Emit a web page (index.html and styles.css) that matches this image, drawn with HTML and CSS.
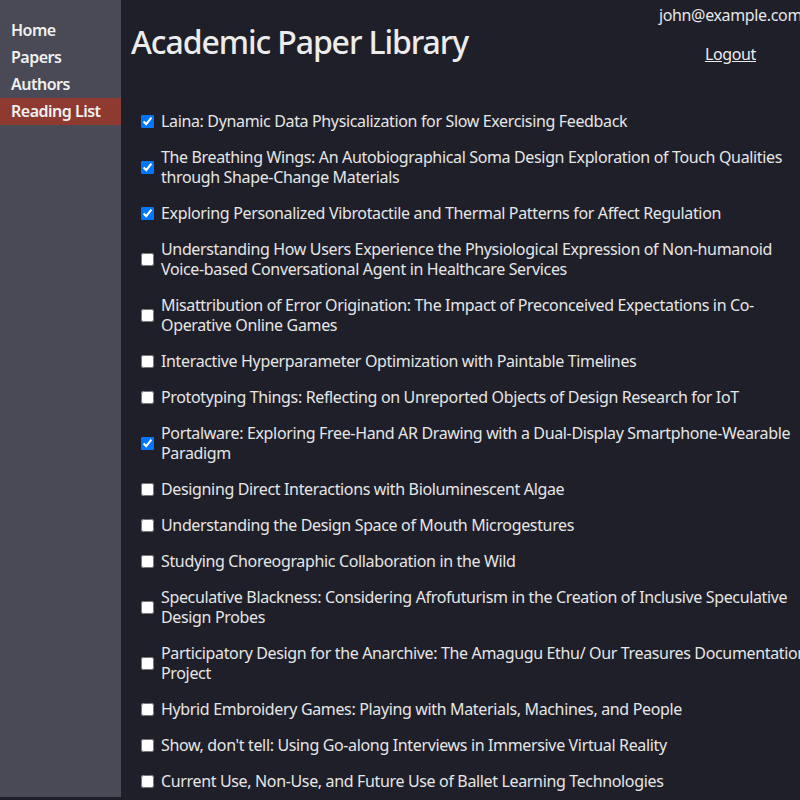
FILE: index.html
```html
<!DOCTYPE html>
<html lang="en">
<head>
<meta charset="utf-8">
<title>Academic Paper Library</title>
<link rel="stylesheet" href="styles.css">
</head>
<body>
<div class="app">
  <nav class="sidebar">
    <a class="nav-link" href="#">Home</a>
    <a class="nav-link" href="#">Papers</a>
    <a class="nav-link" href="#">Authors</a>
    <a class="nav-link active" href="#">Reading List</a>
  </nav>
  <main class="main">
    <header class="header">
      <h1 class="title">Academic Paper Library</h1>
      <div class="user">
        <span class="email">john@example.com</span>
        <a class="logout" href="#">Logout</a>
      </div>
    </header>
    <ul class="list">
      <li class="item"><input type="checkbox" checked><span>Laina: Dynamic Data Physicalization for Slow Exercising Feedback</span></li>
      <li class="item"><input type="checkbox" checked><span>The Breathing Wings: An Autobiographical Soma Design Exploration of Touch Qualities through Shape-Change Materials</span></li>
      <li class="item"><input type="checkbox" checked><span>Exploring Personalized Vibrotactile and Thermal Patterns for Affect Regulation</span></li>
      <li class="item"><input type="checkbox"><span>Understanding How Users Experience the Physiological Expression of Non-humanoid Voice-based Conversational Agent in Healthcare Services</span></li>
      <li class="item"><input type="checkbox"><span>Misattribution of Error Origination: The Impact of Preconceived Expectations in Co-Operative Online Games</span></li>
      <li class="item"><input type="checkbox"><span>Interactive Hyperparameter Optimization with Paintable Timelines</span></li>
      <li class="item"><input type="checkbox"><span>Prototyping Things: Reflecting on Unreported Objects of Design Research for IoT</span></li>
      <li class="item"><input type="checkbox" checked><span>Portalware: Exploring Free-Hand AR Drawing with a Dual-Display Smartphone-Wearable Paradigm</span></li>
      <li class="item"><input type="checkbox"><span>Designing Direct Interactions with Bioluminescent Algae</span></li>
      <li class="item"><input type="checkbox"><span>Understanding the Design Space of Mouth Microgestures</span></li>
      <li class="item"><input type="checkbox"><span>Studying Choreographic Collaboration in the Wild</span></li>
      <li class="item"><input type="checkbox"><span>Speculative Blackness: Considering Afrofuturism in the Creation of Inclusive Speculative Design Probes</span></li>
      <li class="item"><input type="checkbox"><span>Participatory Design for the Anarchive: The Amagugu Ethu/ Our Treasures Documentation Project</span></li>
      <li class="item"><input type="checkbox"><span>Hybrid Embroidery Games: Playing with Materials, Machines, and People</span></li>
      <li class="item"><input type="checkbox"><span>Show, don't tell: Using Go-along Interviews in Immersive Virtual Reality</span></li>
      <li class="item"><input type="checkbox"><span>Current Use, Non-Use, and Future Use of Ballet Learning Technologies</span></li>
    </ul>
  </main>
</div>
</body>
</html>
```
FILE: styles.css
```css
html, body {
  margin: 0;
  padding: 0;
  height: 100%;
  overflow: hidden;
}
body {
  background: #1f1f29;
  color: #e6e6e6;
  font-family: "Noto Sans", sans-serif;
  font-size: 16px;
  letter-spacing: -0.35px;
}
.app {
  display: flex;
  height: 100%;
  width: 816px;
}
.sidebar {
  width: 121px;
  flex-shrink: 0;
  height: 797px;
  background: #4a4a56;
  display: flex;
  flex-direction: column;
  padding-top: 17px;
  box-sizing: border-box;
}
.nav-link {
  display: block;
  color: #f0f0f0;
  text-decoration: none;
  font-weight: 600;
  font-size: 16px;
  letter-spacing: -0.5px;
  line-height: 27px;
  padding-left: 11px;
}
.nav-link.active {
  background: #8e3a31;
}
.main {
  flex: 1;
  padding-left: 10px;
  min-width: 0;
}
.header {
  display: flex;
  justify-content: space-between;
  align-items: flex-start;
}
.title {
  margin: 22px 0 0 0;
  font-size: 32px;
  font-weight: 500;
  letter-spacing: -1.1px;
  line-height: 40px;
  color: #ececec;
}
.user {
  display: flex;
  flex-direction: column;
  align-items: center;
  padding-top: 4px;
  margin-right: 14px;
}
.email {
  line-height: 22px;
}
.logout {
  color: #ececec;
  margin-top: 17px;
  line-height: 22px;
}
.list {
  list-style: none;
  margin: 46px 0 0 0;
  padding: 0 0 0 7px;
}
.item {
  display: flex;
  align-items: center;
  line-height: 20px;
  margin-bottom: 16px;
}
.item input {
  margin: 0 7px 0 3px;
  width: 13px;
  height: 13px;
  flex-shrink: 0;
}
```
